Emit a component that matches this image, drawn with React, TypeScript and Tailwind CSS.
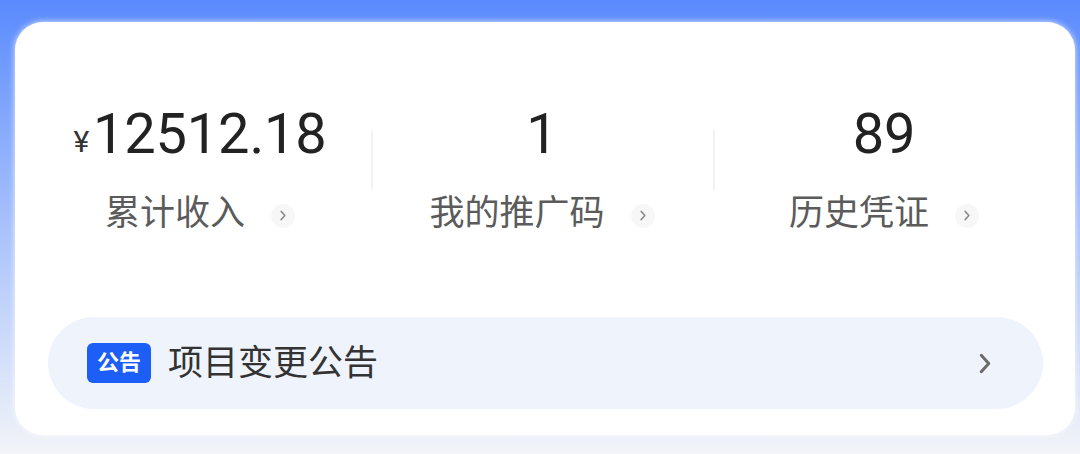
import React from 'react';

const stats = [
  { value: '12512.18', label: '累计收入', yen: true },
  { value: '1', label: '我的推广码' },
  { value: '89', label: '历史凭证' },
];

function Chevron({ className }: { className?: string }) {
  return (
    <svg viewBox="0 0 8 14" className={className} fill="none">
      <path d="M1.5 1.5 6.5 7l-5 5.5" stroke="currentColor" strokeWidth="2" strokeLinecap="round" strokeLinejoin="round" />
    </svg>
  );
}

export default function App() {
  return (
    <div
      className="w-[1080px] h-[454px] overflow-hidden bg-gradient-to-b from-[#5a8afd] via-[#a9c1fb] to-[#f2f4f7] pt-[22px] pl-[15px]"
      style={{ fontFamily: 'Roboto, "Noto Sans CJK SC", sans-serif' }}
    >
      <div className="w-[1060px] h-[413px] rounded-[28px] bg-white shadow-[0_0_6px_rgba(255,255,255,0.8)] pt-[84px] pl-[14px]">
        {/* stats */}
        <div className="flex">
          {stats.map((s, i) => (
            <div key={s.label} className="relative w-[342px] flex flex-col items-center">
              {i > 0 && <div className="absolute left-0 top-[24px] h-[60px] w-[2px] bg-[#f3f3f3]" />}
              <div className="flex items-end h-[56px] text-[56px] leading-none text-[#222] font-normal tracking-[-0.2px]">
                {s.yen && <span className="text-[30px] mb-[5px] mr-[4px] text-[#333]">¥</span>}
                {s.value}
              </div>
              <div className="mt-[34px] flex items-center">
                <span className="text-[35px] leading-none text-[#5b5b5b]">{s.label}</span>
                <span className="ml-[26px] mt-[4px] w-[24px] h-[24px] rounded-full bg-[#f7f7f7] flex items-center justify-center text-[#8a8a8a]">
                  <Chevron className="w-[6px] h-[11px]" />
                </span>
              </div>
            </div>
          ))}
        </div>

        {/* notice */}
        <div className="mt-[86px] ml-[19px] w-[995px] h-[92px] rounded-full bg-[#eff3fc] flex items-center pl-[39px] pr-[52px]">
          <span className="w-[64px] h-[40px] rounded-[6px] bg-[#1c5ef6] text-white text-[22px] font-bold leading-none flex items-center justify-center">
            公告
          </span>
          <span className="ml-[17px] text-[35px] leading-none text-[#333]">项目变更公告</span>
          <Chevron className="ml-auto w-[12px] h-[21px] text-[#6b6b6b]" />
        </div>
      </div>
    </div>
  );
}
